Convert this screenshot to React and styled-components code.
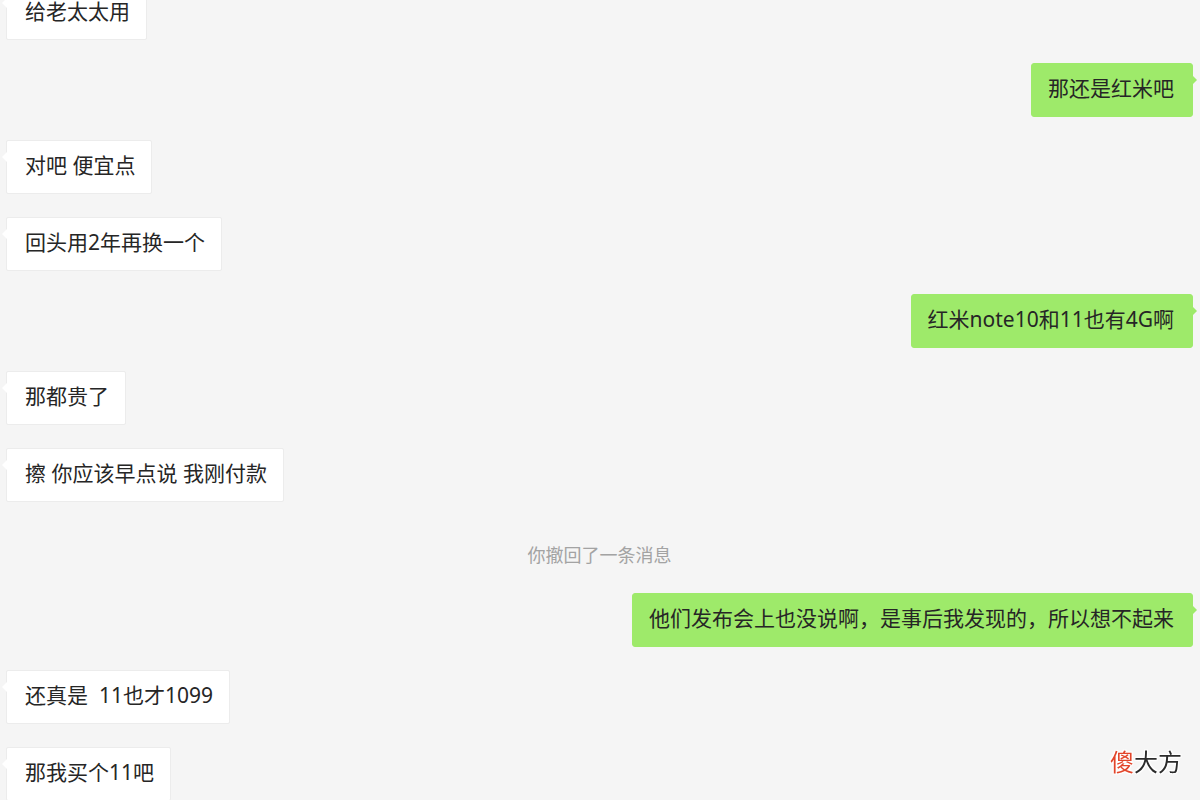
import React from "react";
import styled, { createGlobalStyle, css } from "styled-components";

const GlobalStyle = createGlobalStyle`
  * { box-sizing: border-box; }
  body {
    margin: 0;
    background: #f5f5f5;
    font-family: "Noto Sans", "Noto Sans CJK SC", sans-serif;
    color: #262626;
  }
`;

const Viewport = styled.main`
  display: flex;
  flex-direction: column;
  justify-content: flex-end;
  height: 100vh;
  overflow: hidden;
`;

const Thread = styled.ol`
  display: flex;
  flex-direction: column;
  flex-shrink: 0;
  gap: 23px;
  margin: 0 0 -1px;
  padding: 0 7px 0 6px;
  list-style: none;
`;

const Row = styled.li`
  display: flex;
  justify-content: ${({ $mine }) => ($mine ? "flex-end" : "flex-start")};
`;

const received = css`
  padding: 9px 16px 13px 18px;
  background: #ffffff;
  border: 1px solid #ececec;
  border-radius: 2px;

  &::before {
    left: -5px;
    border-right: 5px solid #ffffff;
  }
`;

const sent = css`
  padding: 9px 18px 13px 16px;
  background: #9eea6a;
  border: 1px solid #9eea6a;
  border-radius: 3px;

  &::before {
    right: -5px;
    border-left: 5px solid #9eea6a;
  }
`;

const Bubble = styled.p`
  position: relative;
  margin: 0;
  font-size: 21px;
  line-height: 30px;
  white-space: pre-wrap;

  &::before {
    content: "";
    position: absolute;
    top: 11px;
    border-top: 5px solid transparent;
    border-bottom: 5px solid transparent;
  }

  ${({ $mine }) => ($mine ? sent : received)}
`;

const Notice = styled.li`
  padding: 18px 0 3px;
  color: #a3a3a3;
  font-size: 18px;
  line-height: 24px;
  text-align: center;
`;

const Watermark = styled.div`
  position: fixed;
  right: 18px;
  bottom: 20px;
  font-size: 24px;
  line-height: 36px;
  color: #2b2b2b;
  text-shadow: 1px 1px 1px #fff, -1px -1px 1px #fff, 1px -1px 1px #fff,
    -1px 1px 1px #fff, 0 0 3px #fff;
`;

const Accent = styled.span`
  color: #e2452a;
`;

const messages = [
  { text: "给老太太用" },
  { text: "那还是红米吧", mine: true },
  { text: "对吧 便宜点" },
  { text: "回头用2年再换一个" },
  { text: "红米note10和11也有4G啊", mine: true },
  { text: "那都贵了" },
  { text: "擦 你应该早点说 我刚付款" },
  { text: "你撤回了一条消息", notice: true },
  { text: "他们发布会上也没说啊，是事后我发现的，所以想不起来", mine: true },
  { text: "还真是  11也才1099" },
  { text: "那我买个11吧" },
];

export default function App() {
  return (
    <>
      <GlobalStyle />
      <Viewport lang="zh-CN">
        <Thread>
          {messages.map(({ text, mine, notice }) =>
            notice ? (
              <Notice key={text}>{text}</Notice>
            ) : (
              <Row key={text} $mine={mine}>
                <Bubble $mine={mine}>{text}</Bubble>
              </Row>
            )
          )}
        </Thread>
        <Watermark>
          <Accent>傻</Accent>大方
        </Watermark>
      </Viewport>
    </>
  );
}
